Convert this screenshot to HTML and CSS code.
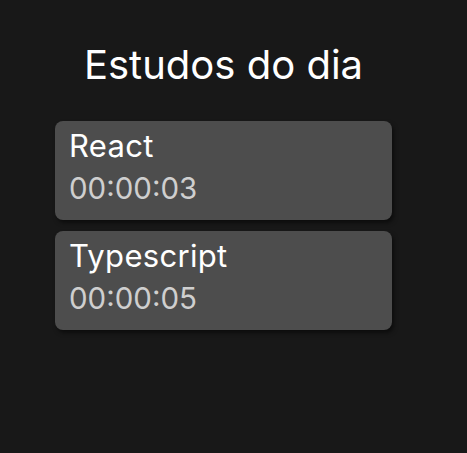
FILE: index.html
```html
<!DOCTYPE html>
<html lang="pt">
<head>
<meta charset="utf-8">
<link rel="stylesheet" href="styles.css">
</head>
<body>
<main class="panel">
  <h1 class="title">Estudos do dia</h1>
  <ul class="list">
    <li class="card">
      <span class="name">React</span>
      <span class="time">00:00:03</span>
    </li>
    <li class="card">
      <span class="name">Typescript</span>
      <span class="time">00:00:05</span>
    </li>
  </ul>
</main>
</body>
</html>
```
FILE: styles.css
```css
html, body {
  margin: 0;
  padding: 0;
  background: #181818;
  height: 100%;
}
body {
  font-family: "Inter", "Noto Sans", sans-serif;
  color: #ffffff;
}
.panel {
  width: 337px;
  margin-left: 55px;
  padding-top: 38px;
  display: flex;
  flex-direction: column;
}
.title {
  margin: 0 0 29px;
  font-size: 40px;
  font-weight: 400;
  line-height: 54px;
  text-align: center;
}
.list {
  list-style: none;
  margin: 0;
  padding: 0;
  display: flex;
  flex-direction: column;
  gap: 11px;
}
.card {
  background: #4d4d4d;
  border-radius: 8px;
  box-shadow: 2px 3px 4px rgba(0, 0, 0, 0.5);
  height: 99px;
  box-sizing: border-box;
  padding: 5px 14px;
  display: flex;
  flex-direction: column;
}
.name {
  font-size: 31px;
  line-height: 40px;
  letter-spacing: 0.3px;
  color: #ffffff;
}
.time {
  font-size: 29.5px;
  line-height: 44px;
  color: #cfcfcf;
}
```
